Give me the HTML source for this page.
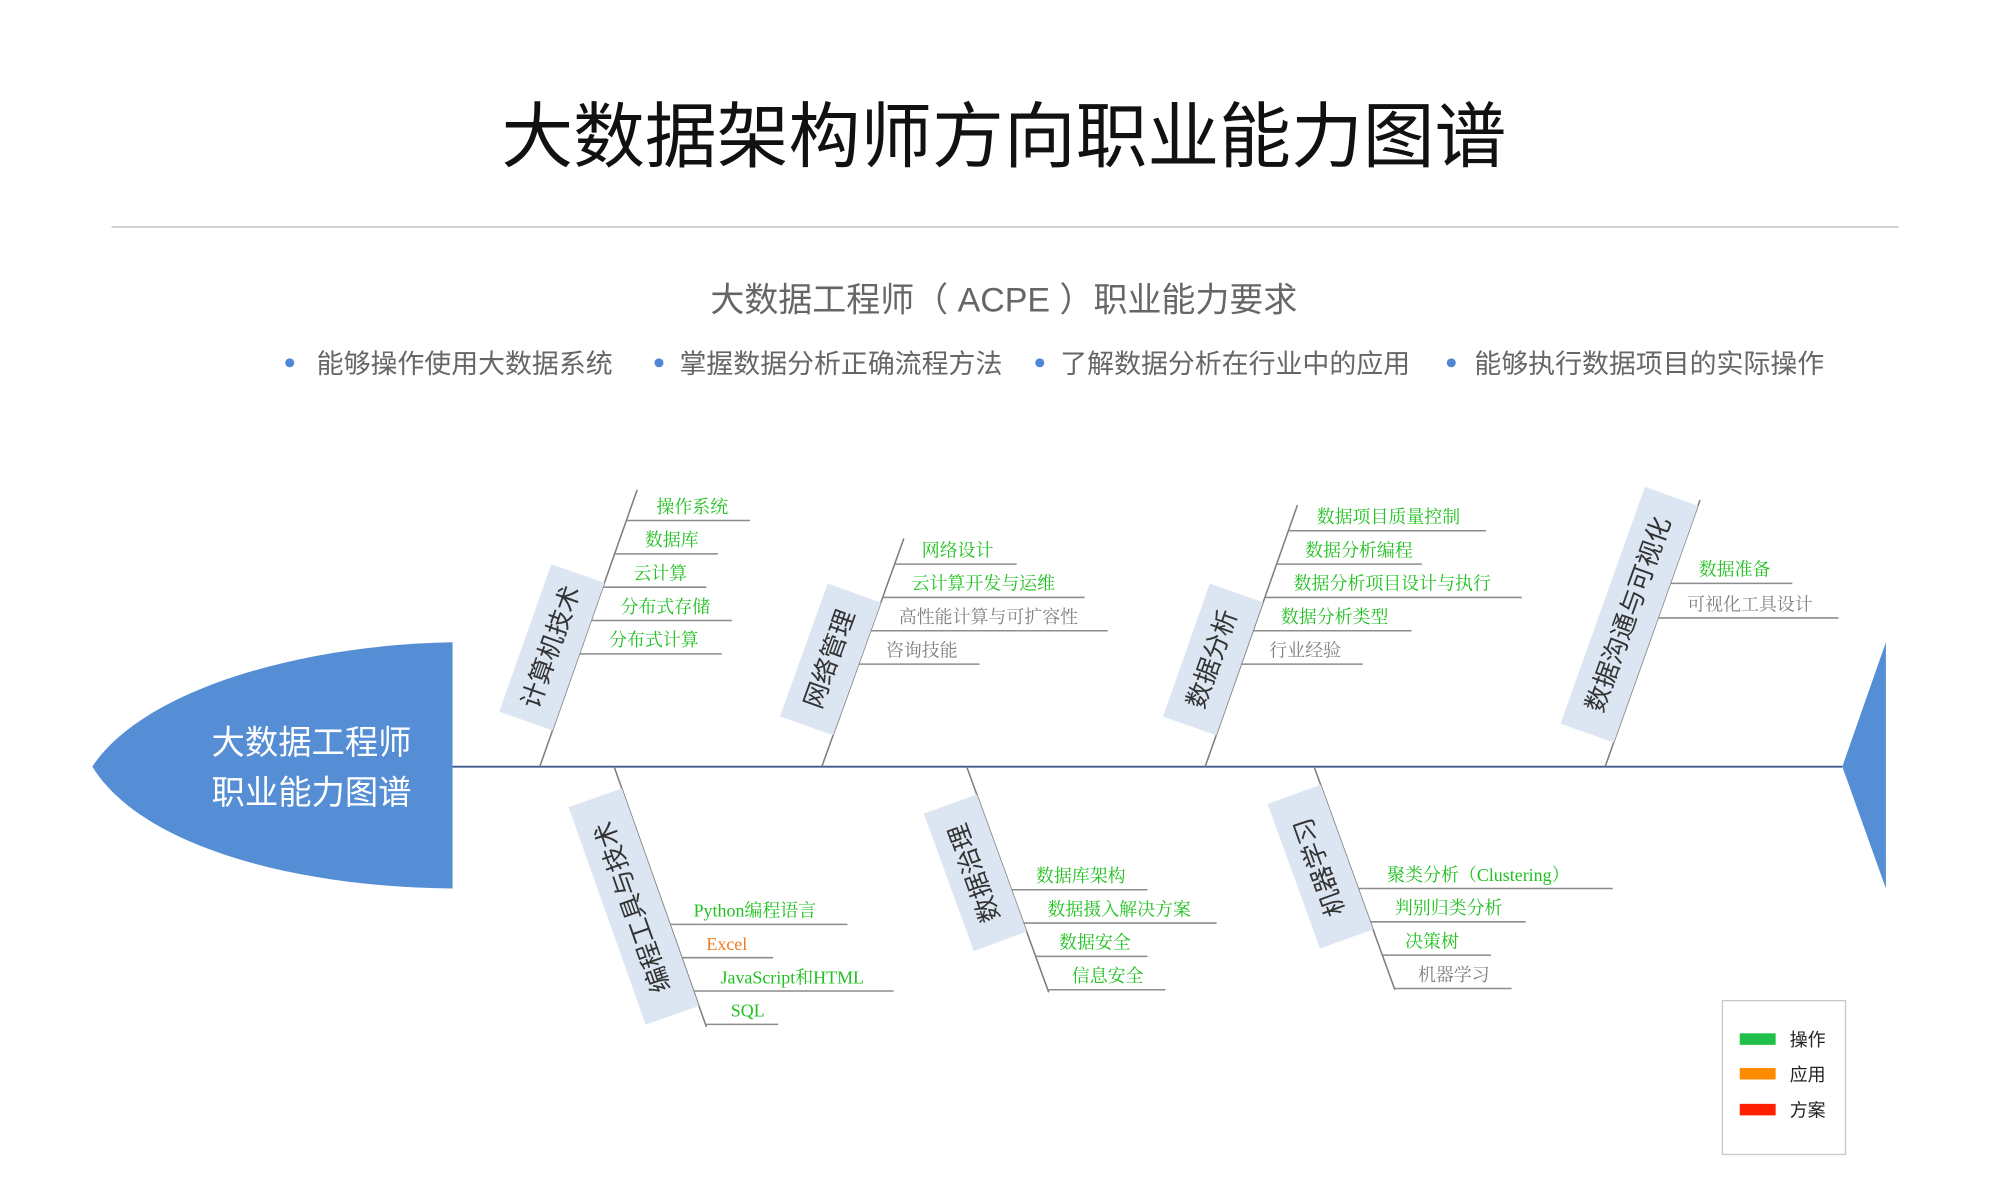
<!DOCTYPE html>
<html><head><meta charset="utf-8"><style>
html,body{margin:0;padding:0;background:#fff;}
svg{display:block;}
.t{font-family:"Liberation Sans","Noto Sans CJK SC",sans-serif;}
.s{font-family:"Liberation Serif","Noto Serif CJK SC",serif;font-size:14px;}
.g{fill:#1fc01f;} .gr{fill:#7f7f7f;} .o{fill:#f07a22;}
.ln{stroke:#8c8c8c;stroke-width:1.2;fill:none;}
.bn{stroke:#7d7d7d;stroke-width:1.2;}
.lb{font-family:"Liberation Sans","Noto Sans CJK SC",sans-serif;font-size:20px;fill:#333;}
</style></head><body>
<svg width="2000" height="1190" viewBox="0 0 1560 928.2" xmlns="http://www.w3.org/2000/svg">
<text class="t" x="783" y="126" text-anchor="middle" font-size="56" fill="#111">大数据架构师方向职业能力图谱</text>
<line x1="87" y1="177" x2="1481" y2="177" stroke="#bfbfbf" stroke-width="1"/>
<text class="t" x="783" y="243" text-anchor="middle" font-size="26.5" fill="#666">大数据工程师（ ACPE ）职业能力要求</text>
<g class="t" font-size="21" fill="#666">
<circle cx="226" cy="283" r="3.5" fill="#4f86d6"/><text x="247" y="291">能够操作使用大数据系统</text>
<circle cx="514" cy="283" r="3.5" fill="#4f86d6"/><text x="530" y="291">掌握数据分析正确流程方法</text>
<circle cx="811" cy="283" r="3.5" fill="#4f86d6"/><text x="827" y="291">了解数据分析在行业中的应用</text>
<circle cx="1132" cy="283" r="3.5" fill="#4f86d6"/><text x="1150" y="291">能够执行数据项目的实际操作</text>
</g>

<path d="M353 501 C230 503 110 540 72 598 C110 660 230 692 353 693 Z" fill="#558ed5"/>
<text class="t" x="243" y="588" text-anchor="middle" font-size="26" fill="#fff">大数据工程师</text>
<text class="t" x="243" y="627" text-anchor="middle" font-size="26" fill="#fff">职业能力图谱</text>
<path d="M1437 598 L1471 501 L1471 693 Z" fill="#558ed5"/>
<line x1="353" y1="598" x2="1437" y2="598" stroke="#3f5a8a" stroke-width="1.5"/>

<line class="bn" x1="421" y1="598" x2="497" y2="382"/>
<line class="bn" x1="641" y1="598" x2="705" y2="420"/>
<line class="bn" x1="940" y1="598" x2="1012" y2="394"/>
<line class="bn" x1="1252" y1="598" x2="1326" y2="390"/>
<line class="bn" x1="479" y1="598" x2="551" y2="801"/>
<line class="bn" x1="754" y1="598" x2="818" y2="774"/>
<line class="bn" x1="1025" y1="598" x2="1088" y2="772"/>

<g transform="translate(421,598) rotate(-70.6)"><rect x="30" y="-44" width="122" height="44" fill="#dce6f2"/><text class="lb" x="91" y="-16" text-anchor="middle">计算机技术</text></g>
<g transform="translate(641,598) rotate(-70.2)"><rect x="26" y="-44" width="110" height="44" fill="#dce6f2"/><text class="lb" x="81" y="-16" text-anchor="middle">网络管理</text></g>
<g transform="translate(940,598) rotate(-70.6)"><rect x="26" y="-44" width="110" height="44" fill="#dce6f2"/><text class="lb" x="81" y="-16" text-anchor="middle">数据分析</text></g>
<g transform="translate(1252,598) rotate(-70.4)"><rect x="20" y="-44" width="196" height="44" fill="#dce6f2"/><text class="lb" x="118" y="-16" text-anchor="middle">数据沟通与可视化</text></g>
<g transform="translate(479,598) rotate(-109.5)"><rect x="-198" y="-44" width="180" height="44" fill="#dce6f2"/><text class="lb" x="-108" y="-16" text-anchor="middle">编程工具与技术</text></g>
<g transform="translate(754,598) rotate(-110)"><rect x="-137" y="-44" width="114" height="44" fill="#dce6f2"/><text class="lb" x="-80" y="-16" text-anchor="middle">数据治理</text></g>
<g transform="translate(1025,598) rotate(-109.9)"><rect x="-135" y="-44" width="120" height="44" fill="#dce6f2"/><text class="lb" x="-75" y="-16" text-anchor="middle">机器学习</text></g>

<g class="s">
<line class="ln" x1="488.6" y1="406" x2="585" y2="406"/><text class="g" x="512" y="400">操作系统</text>
<line class="ln" x1="479.4" y1="432" x2="560" y2="432"/><text class="g" x="503" y="426">数据库</text>
<line class="ln" x1="470.3" y1="458" x2="551" y2="458"/><text class="g" x="494" y="452">云计算</text>
<line class="ln" x1="461.1" y1="484" x2="571" y2="484"/><text class="g" x="484" y="478">分布式存储</text>
<line class="ln" x1="452" y1="510" x2="563" y2="510"/><text class="g" x="475" y="504">分布式计算</text>

<line class="ln" x1="697.9" y1="440" x2="793" y2="440"/><text class="g" x="719" y="434">网络设计</text>
<line class="ln" x1="688.5" y1="466" x2="846" y2="466"/><text class="g" x="711" y="460">云计算开发与运维</text>
<line class="ln" x1="679.2" y1="492" x2="864" y2="492"/><text class="gr" x="701" y="486">高性能计算与可扩容性</text>
<line class="ln" x1="669.8" y1="518" x2="764" y2="518"/><text class="gr" x="691" y="512">咨询技能</text>

<line class="ln" x1="1005" y1="414" x2="1159" y2="414"/><text class="g" x="1027" y="408">数据项目质量控制</text>
<line class="ln" x1="995.8" y1="440" x2="1109" y2="440"/><text class="g" x="1018" y="434">数据分析编程</text>
<line class="ln" x1="986.6" y1="466" x2="1187" y2="466"/><text class="g" x="1009" y="460">数据分析项目设计与执行</text>
<line class="ln" x1="977.4" y1="492" x2="1101" y2="492"/><text class="g" x="999" y="486">数据分析类型</text>
<line class="ln" x1="968.2" y1="518" x2="1063" y2="518"/><text class="gr" x="990" y="512">行业经验</text>

<line class="ln" x1="1302.9" y1="455" x2="1398" y2="455"/><text class="g" x="1325" y="449">数据准备</text>
<line class="ln" x1="1293.3" y1="482" x2="1434" y2="482"/><text class="gr" x="1316" y="476">可视化工具设计</text>

<line class="ln" x1="522.6" y1="721" x2="661" y2="721"/><text class="g" x="541" y="715">Python编程语言</text>
<line class="ln" x1="531.9" y1="747" x2="603" y2="747"/><text class="o" x="551" y="741">Excel</text>
<line class="ln" x1="541.1" y1="773" x2="697" y2="773"/><text class="g" x="562" y="767">JavaScript和HTML</text>
<line class="ln" x1="550.4" y1="799" x2="607" y2="799"/><text class="g" x="570" y="793">SQL</text>

<line class="ln" x1="789" y1="694" x2="895" y2="694"/><text class="g" x="808" y="688">数据库架构</text>
<line class="ln" x1="798.4" y1="720" x2="949" y2="720"/><text class="g" x="817" y="714">数据摄入解决方案</text>
<line class="ln" x1="807.9" y1="746" x2="895" y2="746"/><text class="g" x="826" y="740">数据安全</text>
<line class="ln" x1="817.3" y1="772" x2="909" y2="772"/><text class="g" x="836" y="766">信息安全</text>

<line class="ln" x1="1059.4" y1="693" x2="1258" y2="693"/><text class="g" x="1082" y="687">聚类分析（Clustering）</text>
<line class="ln" x1="1068.8" y1="719" x2="1190" y2="719"/><text class="g" x="1088" y="713">判别归类分析</text>
<line class="ln" x1="1078.2" y1="745" x2="1163" y2="745"/><text class="g" x="1096" y="739">决策树</text>
<line class="ln" x1="1087.6" y1="771" x2="1179" y2="771"/><text class="gr" x="1106" y="765">机器学习</text>
</g>

<rect x="1343.5" y="780.5" width="96" height="120" fill="#fff" stroke="#c8c8c8" stroke-width="1"/>
<rect x="1357" y="806" width="28" height="9" fill="#1fbf4a"/>
<rect x="1357" y="833" width="28" height="9" fill="#ff8c00"/>
<rect x="1357" y="861" width="28" height="9" fill="#ff2000"/>
<g class="t" font-size="14" fill="#222">
<text x="1396" y="816">操作</text><text x="1396" y="843">应用</text><text x="1396" y="871">方案</text>
</g>
</svg>
</body></html>
